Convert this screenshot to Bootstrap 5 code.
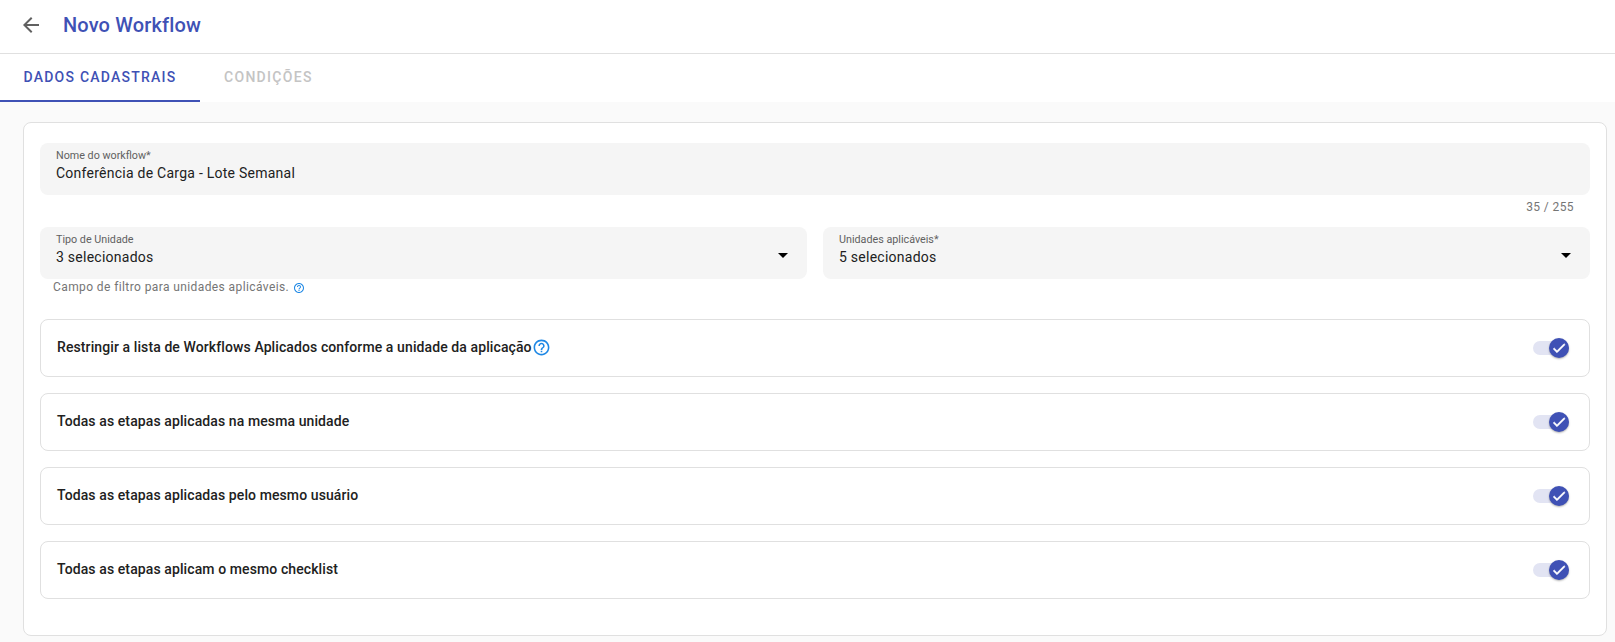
<!DOCTYPE html>
<html lang="pt-BR">
<head>
<meta charset="utf-8">
<title>Novo Workflow</title>
<link href="https://cdn.jsdelivr.net/npm/bootstrap@5.3.0/dist/css/bootstrap.min.css" rel="stylesheet">
<style>
html,body{height:100%}
body{font-family:Roboto,"Liberation Sans",sans-serif;background:#fafafa;color:#212121;overflow:hidden}
.wf-top{height:54px;background:#fff;border-bottom:1px solid #e0e0e0;padding-left:19px;padding-bottom:3px}
.wf-back{width:24px;height:24px;margin-right:20px;color:#616161;flex:none}
.wf-title{font-size:20px;font-weight:500;color:#3f51b5;margin:0;letter-spacing:.15px}
.wf-tabs{height:48px;background:#fff}
.wf-tab{width:200px;height:48px;font-size:14px;font-weight:500;letter-spacing:1.23px;color:#3f51b5;border-bottom:2px solid #3f51b5}
.wf-tab-off{width:auto;padding:0 23px 0 24px;color:#c4c4c4;border-bottom-color:transparent;letter-spacing:1.3px}
.wf-main{padding:20px 8px 0 23px}
.wf-panel{height:514px;background:#fff;border:1px solid #e0e0e0;border-radius:8px;padding:20px 16px 0 16px}
.wf-field{height:52px;background:#f5f5f5;border-radius:8px;padding:6px 16px 0 16px;position:relative}
.wf-label{font-size:10.75px;line-height:14px;color:#616161}
.wf-value{font-size:14px;line-height:20px;letter-spacing:.25px;color:#212121;margin-top:0}
.wf-caret{position:absolute;right:19px;top:26px;width:0;height:0;border-left:5px solid transparent;border-right:5px solid transparent;border-top:5px solid #000}
.wf-count{height:32px;font-size:12px;letter-spacing:.4px;color:#757575;padding:5px 16px 0 0;line-height:14px}
.wf-sel-row{gap:16px}
.wf-hint{height:40px;font-size:12px;letter-spacing:.4px;color:#757575;padding:1px 0 0 13px;line-height:14px;gap:4px}
.wf-hint-ic{width:12px;height:12px;color:#1e88e5;margin-top:2px}
.wf-opt{height:58px;border:1px solid #e0e0e0;border-radius:8px;padding:0 20px 2px 16px;margin-bottom:16px;font-size:14px;font-weight:500;letter-spacing:.1px;color:#212121}
.wf-opt-ic{width:19px;height:19px;color:#1e88e5;margin-top:1px}
.wf-toggle{width:36px;height:14px;background:#e2e4f3;border-radius:7px;position:relative;display:block;top:1px}
.wf-knob{position:absolute;right:0;top:-3px;width:20px;height:20px;border-radius:50%;background:#3f51b5;box-shadow:0 1px 2px rgba(0,0,0,.3);display:flex;align-items:center;justify-content:center}
.wf-knob svg{width:16px;height:16px;color:#fff}
</style>
</head>
<body>
<header class="wf-top d-flex align-items-center">
  <svg class="wf-back" viewBox="0 0 24 24" fill="currentColor"><path d="M20 11H7.83l5.59-5.59L12 4l-8 8 8 8 1.41-1.41L7.83 13H20v-2z"/></svg>
  <h1 class="wf-title">Novo Workflow</h1>
</header>
<nav class="wf-tabs d-flex">
  <div class="wf-tab d-flex align-items-center justify-content-center">DADOS CADASTRAIS</div>
  <div class="wf-tab wf-tab-off d-flex align-items-center justify-content-center">CONDIÇÕES</div>
</nav>
<main class="wf-main">
  <section class="wf-panel">
    <div class="wf-field">
      <div class="wf-label">Nome do workflow*</div>
      <div class="wf-value">Conferência de Carga - Lote Semanal</div>
    </div>
    <div class="wf-count text-end">35 / 255</div>
    <div class="d-flex wf-sel-row">
      <div class="wf-field flex-fill w-50">
        <div class="wf-label">Tipo de Unidade</div>
        <div class="wf-value">3 selecionados</div>
        <span class="wf-caret"></span>
      </div>
      <div class="wf-field flex-fill w-50">
        <div class="wf-label">Unidades aplicáveis*</div>
        <div class="wf-value">5 selecionados</div>
        <span class="wf-caret"></span>
      </div>
    </div>
    <div class="wf-hint d-flex align-items-start">
      <span>Campo de filtro para unidades aplicáveis.</span>
      <svg class="wf-hint-ic" viewBox="0 0 24 24" fill="currentColor"><path d="M11 18h2v-2h-2v2zm1-16C6.48 2 2 6.48 2 12s4.48 10 10 10 10-4.48 10-10S17.52 2 12 2zm0 18c-4.41 0-8-3.59-8-8s3.59-8 8-8 8 3.59 8 8-3.59 8-8 8zm0-14c-2.21 0-4 1.79-4 4h2c0-1.1.9-2 2-2s2 .9 2 2c0 2-3 1.75-3 5h2c0-2.25 3-2.5 3-5 0-2.21-1.79-4-4-4z"/></svg>
    </div>
    <div class="wf-opt d-flex align-items-center">
      <span>Restringir a lista de Workflows Aplicados conforme a unidade da aplicação</span>
      <svg class="wf-opt-ic" viewBox="0 0 24 24" fill="currentColor"><path d="M11 18h2v-2h-2v2zm1-16C6.48 2 2 6.48 2 12s4.48 10 10 10 10-4.48 10-10S17.52 2 12 2zm0 18c-4.41 0-8-3.59-8-8s3.59-8 8-8 8 3.59 8 8-3.59 8-8 8zm0-14c-2.21 0-4 1.79-4 4h2c0-1.1.9-2 2-2s2 .9 2 2c0 2-3 1.75-3 5h2c0-2.25 3-2.5 3-5 0-2.21-1.79-4-4-4z"/></svg>
      <span class="wf-toggle ms-auto"><span class="wf-knob"><svg viewBox="0 0 24 24" fill="currentColor"><path d="M9 16.17 4.83 12l-1.42 1.41L9 19 21 7l-1.41-1.41z" stroke="currentColor" stroke-width="1"/></svg></span></span>
    </div>
    <div class="wf-opt d-flex align-items-center">
      <span>Todas as etapas aplicadas na mesma unidade</span>
      <span class="wf-toggle ms-auto"><span class="wf-knob"><svg viewBox="0 0 24 24" fill="currentColor"><path d="M9 16.17 4.83 12l-1.42 1.41L9 19 21 7l-1.41-1.41z" stroke="currentColor" stroke-width="1"/></svg></span></span>
    </div>
    <div class="wf-opt d-flex align-items-center">
      <span>Todas as etapas aplicadas pelo mesmo usuário</span>
      <span class="wf-toggle ms-auto"><span class="wf-knob"><svg viewBox="0 0 24 24" fill="currentColor"><path d="M9 16.17 4.83 12l-1.42 1.41L9 19 21 7l-1.41-1.41z" stroke="currentColor" stroke-width="1"/></svg></span></span>
    </div>
    <div class="wf-opt d-flex align-items-center">
      <span>Todas as etapas aplicam o mesmo checklist</span>
      <span class="wf-toggle ms-auto"><span class="wf-knob"><svg viewBox="0 0 24 24" fill="currentColor"><path d="M9 16.17 4.83 12l-1.42 1.41L9 19 21 7l-1.41-1.41z" stroke="currentColor" stroke-width="1"/></svg></span></span>
    </div>
  </section>
</main>
<script src="https://cdn.jsdelivr.net/npm/bootstrap@5.3.0/dist/js/bootstrap.bundle.min.js"></script>
</body>
</html>
